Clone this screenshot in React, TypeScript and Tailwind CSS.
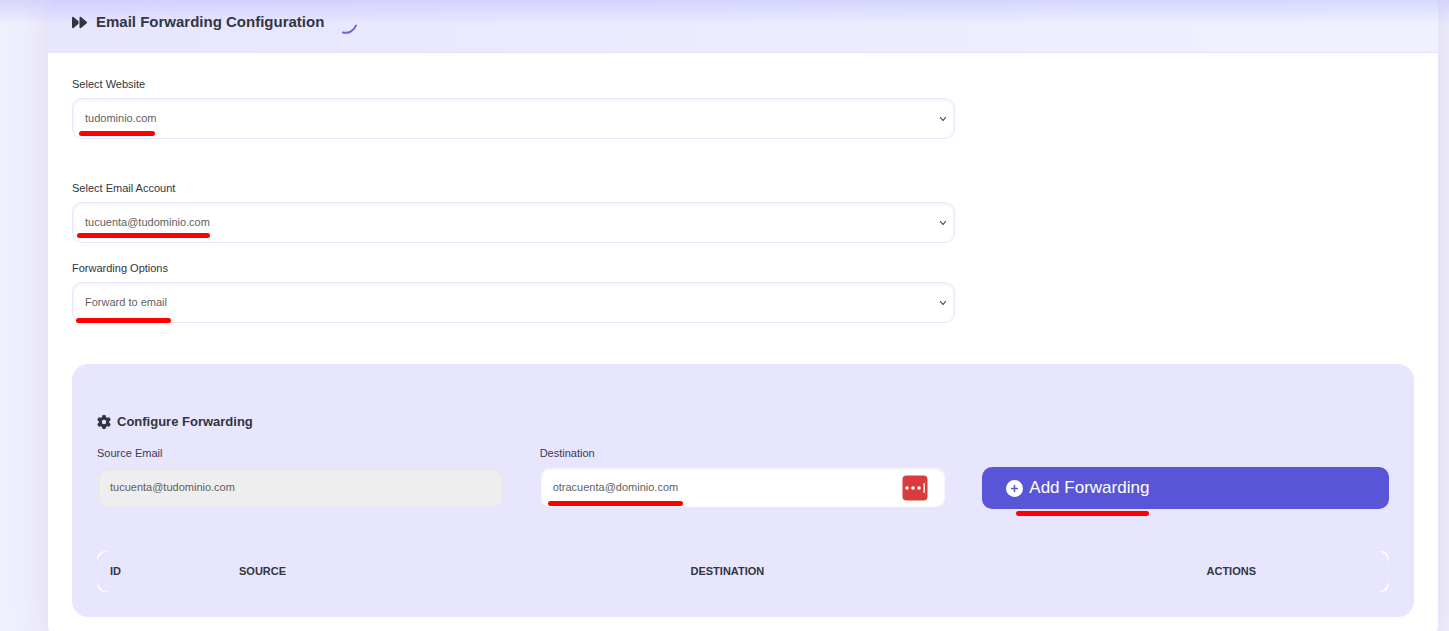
import { useState } from 'react';
import type { ReactNode } from 'react';
import { clsx } from 'clsx';
import { FaCirclePlus, FaForward, FaGear } from 'react-icons/fa6';

const fieldClass =
  'block h-[41px] w-full rounded-[10px] border border-[#e8e5ff] px-3 text-[11px] text-[#5f5f64] shadow-[inset_0_1px_3px_rgba(60,50,120,0.09)] outline-none';

function Underline({ className }: { className: string }) {
  return (
    <span
      aria-hidden
      className={clsx('pointer-events-none absolute h-[5px] rounded-full bg-[#ff0000]', className)}
    />
  );
}

type SelectFieldProps = {
  id: string;
  label: string;
  option: string;
  underline: string;
};

function SelectField({ id, label, option, underline }: SelectFieldProps) {
  return (
    <div className="w-2/3 pr-3">
      <label htmlFor={id} className="block text-[11px] leading-4 text-[#2f3640]">
        {label}
      </label>
      <div className="relative mt-1.5">
        <select id={id} className={clsx(fieldClass, 'appearance-none bg-white')}>
          <option>{option}</option>
        </select>
        <svg
          aria-hidden
          viewBox="0 0 16 16"
          className="pointer-events-none absolute top-[17px] right-2 size-2"
          fill="none"
          stroke="#343a40"
          strokeWidth="2.3"
          strokeLinecap="round"
          strokeLinejoin="round"
        >
          <path d="m3 5 5 6 5-6" />
        </svg>
        <Underline className={underline} />
      </div>
    </div>
  );
}

function TextField({ id, label, children }: { id: string; label: string; children: ReactNode }) {
  return (
    <div>
      <label htmlFor={id} className="block text-[11px] leading-4 text-[#3a3c52]">
        {label}
      </label>
      <div className="relative mt-1.5">{children}</div>
    </div>
  );
}

function ForwardingTable() {
  return (
    <div className="mt-[42px] rounded-lg bg-white">
      <table className="w-full table-fixed border-separate border-spacing-0 rounded-xl border border-[#eae8ff] bg-[#e8e5ff] text-left text-[11px] text-[#2f3640]">
        <thead>
          <tr className="h-[39px]">
            <th className="w-[10%] px-3 font-bold">ID</th>
            <th className="w-[35%] px-3 font-bold">SOURCE</th>
            <th className="w-[40%] px-3 font-bold">DESTINATION</th>
            <th className="w-[15%] px-3 font-bold">ACTIONS</th>
          </tr>
        </thead>
      </table>
    </div>
  );
}

export default function App() {
  const [destination, setDestination] = useState('otracuenta@dominio.com');

  return (
    <div className="h-screen overflow-hidden bg-[#f0effe] pr-[11px] pl-12 font-['Liberation_Sans',Arial,sans-serif]">
      <div
        aria-hidden
        className="pointer-events-none fixed inset-x-0 top-0 z-10 h-6 bg-linear-to-b from-[#7878ff]/20 to-transparent"
      />
      <main className="-mt-2 overflow-hidden rounded-2xl bg-white shadow-[0_0_40px_rgba(50,40,110,0.1)]">
        <header className="flex h-[61px] items-center border-b border-[#e6e4fc] bg-linear-to-r from-[#e8e5ff] to-[#eff1ff] px-6">
          <FaForward className="size-[15px] text-[#2f3640]" />
          <h1 className="ml-[9px] text-[15px] font-bold text-[#2f3640]">
            Email Forwarding Configuration
          </h1>
          <svg aria-hidden viewBox="0 0 24 24" className="ml-2 size-6 overflow-visible" fill="none">
            <path
              d="M11 22.500C17 24 22 20.500 24 15.500"
              stroke="#6a61dc"
              strokeWidth="2"
              strokeLinecap="round"
            />
          </svg>
        </header>

        <div className="px-6 pt-[23px] pb-6">
          <SelectField
            id="website"
            label="Select Website"
            option="tudominio.com"
            underline="top-[33px] left-[7px] w-[76px]"
          />
          <div className="mt-[41px] flex flex-col gap-[17px]">
            <SelectField
              id="account"
              label="Select Email Account"
              option="tucuenta@tudominio.com"
              underline="top-[31px] left-[5px] w-[133px]"
            />
            <SelectField
              id="forward-option"
              label="Forwarding Options"
              option="Forward to email"
              underline="top-9 left-1 w-[95px]"
            />
          </div>

          <section className="mt-[41px] rounded-2xl bg-[#e8e5ff] px-[25px] pt-12 pb-[25px]">
            <h2 className="flex items-center gap-1.5 text-[13px] leading-5 font-bold text-[#2f3640]">
              <FaGear className="size-[14px]" />
              Configure Forwarding
            </h2>
            <div className="mt-[13px] grid grid-cols-3 gap-9">
              <TextField id="source" label="Source Email">
                <input
                  id="source"
                  type="email"
                  disabled
                  value="tucuenta@tudominio.com"
                  className={clsx(fieldClass, 'bg-[#eeeeee] pb-0.5')}
                />
              </TextField>
              <TextField id="destination" label="Destination">
                <input
                  id="destination"
                  type="email"
                  value={destination}
                  onChange={(e) => setDestination(e.target.value)}
                  className={clsx(fieldClass, 'bg-white pb-0.5')}
                />
                <svg
                  aria-hidden
                  viewBox="0 0 26 26"
                  className="absolute top-2 right-[18px] size-[26px]"
                >
                  <rect x="0.5" y="0.5" width="25" height="25" rx="4" fill="#d63d3c" />
                  <g fill="#fff">
                    <circle cx="5" cy="13" r="1.800" />
                    <circle cx="11" cy="13" r="1.800" />
                    <circle cx="17" cy="13" r="1.800" />
                    <rect x="21.500" y="8" width="1.300" height="10" rx="0.500" />
                  </g>
                </svg>
                <Underline className="top-[34px] left-2 w-[135px]" />
              </TextField>
              <div className="relative mt-[22px]">
                <button
                  type="button"
                  className="flex h-[42px] w-full items-center gap-1.5 rounded-[10px] bg-[#5856d6] px-6 text-[17px] text-white"
                >
                  <FaCirclePlus className="size-[17px]" />
                  Add Forwarding
                </button>
                <Underline className="top-[44px] left-[34px] w-[133px]" />
              </div>
            </div>
            <ForwardingTable />
          </section>
        </div>
      </main>
    </div>
  );
}
